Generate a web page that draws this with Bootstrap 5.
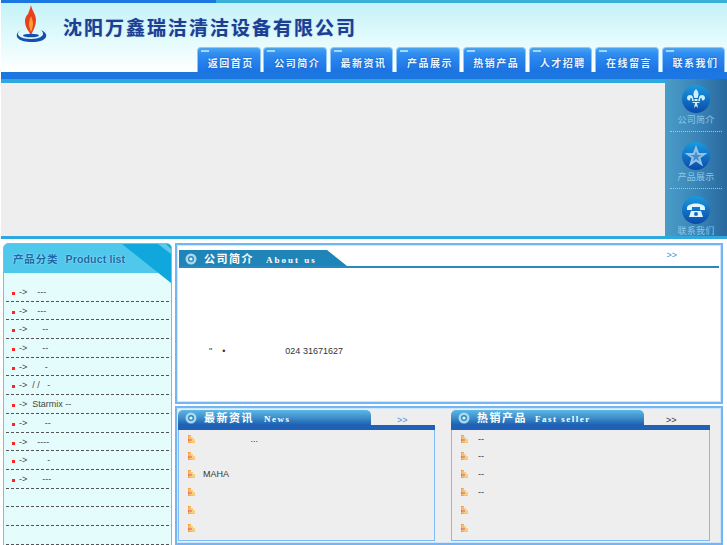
<!DOCTYPE html>
<html lang="zh-CN">
<head>
    <meta charset="UTF-8">
    <meta name="viewport" content="width=device-width, initial-scale=1.0">
    <title>沈阳万鑫瑞洁清洁设备有限公司</title>
    <link href="https://cdn.jsdelivr.net/npm/bootstrap@5.3.0/dist/css/bootstrap.min.css" rel="stylesheet">
    <style>
        html, body { height: 545px; overflow: hidden; }
        body { background: #fff; font-family: "Liberation Sans", "Noto Sans CJK SC", sans-serif; font-size: 9px; color: #333; line-height: 1; }
        .page-top { height: 3px; margin-left: 1px; background: linear-gradient(90deg, #1a78e0 0 215px, #38b0d8 215px); }
        .page-head { height: 69px; margin-left: 1px; background: linear-gradient(180deg, #c4f2f8 0%, #e4fbfc 55%, #fff 100%); }
        .logo-box { width: 62px; padding: 2px 0 0 14px; }
        .co-name { font-family: "Noto Sans CJK SC", sans-serif; font-weight: 700; font-size: 19px; letter-spacing: 2px; color: #1c3f94; padding-top: 12px; line-height: 24px; text-shadow: 0 0 1px #7f9fd0; white-space: nowrap; }
        .tab-row { position: absolute; top: 47px; left: 197px; gap: 2.9px; }
        .tab-item { position: relative; width: 63.5px; height: 25px; padding: 9px 0 0 4px; text-align: center; font-family: "Noto Sans CJK SC", sans-serif; font-weight: 700; font-size: 10px; letter-spacing: 1.5px; line-height: 12px; color: #e8f6ff; text-shadow: 0 0 2px #0d4fa8; background: linear-gradient(180deg, #4aa4f0 0%, #2f8cf0 25%, #1b72e4 100%); border: 1px solid #8fc8f6; border-bottom: 0; border-radius: 4px 4px 0 0; }
        .tab-item::before { content: ""; position: absolute; left: 3px; top: 2px; width: 8px; height: 2px; background: #a6d6fa; }
        .head-band { height: 11px; margin-left: 1px; background: #1c78e0; border-bottom: 4px solid #2fa8e0; }
        .hero-area { height: 156px; margin-left: 1px; background: #eeeeee; border-bottom: 3px solid #2fa8e0; }
        .side-links { position: relative; width: 62px; height: 157px; margin: -4px 0 0 auto; background: linear-gradient(90deg, #4a9cc8 0%, #3a86b8 50%, #2a689e 100%); }
        .side-item { text-align: center; color: #8cc8e8; font-size: 9px; letter-spacing: .3px; font-family: "Noto Sans CJK SC", sans-serif; border-bottom: 1px dotted #9fc8dc; margin: 0 5px; }
        .side-item:nth-child(1) { height: 53px; padding-top: 6px; }
        .side-item:nth-child(2) { height: 57px; padding-top: 10px; }
        .side-item:nth-child(3) { height: 47px; padding-top: 7px; border-bottom: 0; }
        .side-item svg { display: block; margin: 0 auto 2px; }
        .page-body { gap: 3px; padding: 4px 4px 0 3px; }
        .left-col { position: relative; width: 169px; height: 310px; flex: none; background: #e4fcfc; border: 1px solid #8ab4e4; border-top-left-radius: 5px; border-top-right-radius: 5px; overflow: hidden; }
        .left-head { height: 29px; background: #4fc8ec; padding: 8px 0 0 9px; font-weight: 700; font-size: 10.500px; letter-spacing: .85px; line-height: 14px; color: #1a6aa8; text-shadow: 0 0 2px #b8ecfa; }
        .list-en { letter-spacing: .17px; margin-left: 4px; }
        .left-corner { position: absolute; right: 0; top: 0; }
        .left-list { padding: 10px 2px 0 2px; }
        .left-list li { height: 18.7px; border-bottom: 1px dashed #555; padding-top: 4px; white-space: pre; line-height: 10px; color: #444; }
        .red-dot { display: inline-block; width: 3px; height: 3px; background: #f22; margin: 0 4px 0 6px; vertical-align: 0; }
        .right-col { flex: 1; min-width: 0; }
        .about-box { height: 161px; border: 2px solid #74b6f4; box-shadow: inset 0 0 0 1px #cfe6fc; padding: 5px 2px 0 2px; margin-bottom: 2px; }
        .about-head { border-bottom: 2px solid #2a88c0; height: 18px; }
        .about-tab { position: relative; width: 168px; height: 16px; background: #1f85b8; clip-path: polygon(0 0, 148px 0, 100% 100%, 0 100%); padding: 1px 0 0 6px; color: #fff; font-family: "Noto Sans CJK SC", sans-serif; font-weight: 700; font-size: 11px; letter-spacing: 1.5px; line-height: 14px; }
        .en-title { font-family: "Liberation Serif", serif; font-size: 9px; letter-spacing: 1.5px; margin-left: 10px; }
        .about-tab .en-title { letter-spacing: 2px; margin-left: 12px; }
        .more-link { color: #3f8fe6; font-size: 9px; padding-top: 1px; }
        .about-head .more-link { margin: 0 42px 0 auto; }
        .news-tab-row .more-link { margin-left: 26px; padding-top: 6px; }
        .news-card + .news-card .more-link { margin-left: 22px; color: #333; }
        .about-text { padding: 79px 0 0 30px; white-space: pre; height: 100px; }
        .about-text span { margin-left: 60px; }
        .news-box { height: 139px; border: 2px solid #74b6f4; box-shadow: inset 0 0 0 1px #cfe6fc; background: #eeeeee; padding: 2px 1px 0 1px; gap: 16px; }
        .news-card { width: 257px; flex: none; }
        .news-card + .news-card { width: 259px; }
        .news-tab-row { height: 15px; }
        .news-tab { width: 193px; height: 15px; background: linear-gradient(180deg, #5cb8e4 0%, #3f90cc 50%, #1e60b2 100%); border-radius: 5px 5px 0 0; padding: 1px 0 0 7px; color: #fff; font-family: "Noto Sans CJK SC", sans-serif; font-weight: 700; font-size: 11px; letter-spacing: 1.5px; line-height: 13px; }
        .news-bar { height: 5px; background: #2060b8; }
        .news-list { height: 111px; border: 1px solid #82bcf8; border-top: 0; padding: 0.5px 0 0 9px; }
        .news-list li { height: 17.9px; white-space: pre; line-height: 10px; padding-top: 3px; }
        .dot-icon { display: inline-block; width: 7px; height: 8px; margin-right: 8px; vertical-align: -1px; }
        .news-card + .news-card .dot-icon { margin-right: 10px; }
        .ring-icon { vertical-align: -2px; margin-right: 7px; }
        .news-card + .news-card .en-title { margin-left: 8px; }
    </style>
</head>
<body>

    <svg width="0" height="0" class="position-absolute">
        <symbol id="dots" viewBox="0 0 7 8">
            <rect x="0" y="0" width="3" height="8" fill="#f59a23"/>
            <rect x="3" y="2" width="2" height="6" fill="#f7b733"/>
            <rect x="5" y="4" width="2" height="4" fill="#f9c95a"/>
            <rect x="0" y="4" width="4" height="2" fill="#ea4a1f"/>
            <path d="M0 2h7M0 4h7M0 6h7M2 0v8M4 0v8" stroke="#eee" stroke-width=".5"/>
        </symbol>
        <symbol id="ring" viewBox="0 0 12 12">
            <circle cx="6" cy="6" r="5.500" fill="#a8d8ee"/>
            <circle cx="6" cy="6" r="3" fill="#2a88c0"/>
            <circle cx="6" cy="6" r="1.600" fill="#e8f6fc"/>
        </symbol>
        <linearGradient id="orb" x1="0" y1="0" x2="0" y2="1">
            <stop offset="0" stop-color="#1a9ae0"/>
            <stop offset="1" stop-color="#0a4aa8"/>
        </linearGradient>
    </svg>

    <div class="page-top"></div>
    <header class="page-head d-flex">
        <div class="logo-box">
            <svg width="32" height="38" viewBox="0 0 32 38">
                <path d="M16 0c1 6 5 9 5 15 0 5-2 9-5 15-3-5-6-8-6-14 0-3 1-5 3-7 1-3 2-5 3-9z" fill="#e8401c"/>
                <path d="M16 11c1 3 2 5 2 8 0 3-1 5-2 8-1-3-2-5-2-8 0-3 1-5 2-8z" fill="#f9a03a"/>
                <path d="M8 24c-5 2-7 5-6 8 2 4 9 5 15 5 7 0 13-2 14-5 1-3-1-5-5-7 2 2 3 4 1 6-2 2-6 3-11 3-6 0-10-1-12-3-2-2-1-5 4-7z" fill="#1450b0"/>
                <ellipse cx="16" cy="30.500" rx="8" ry="1.800" fill="#1450b0"/>
            </svg>
        </div>
        <div class="co-name">沈阳万鑫瑞洁清洁设备有限公司</div>
        <nav class="tab-row d-flex">
            <div class="tab-item">返回首页</div>
            <div class="tab-item">公司简介</div>
            <div class="tab-item">最新资讯</div>
            <div class="tab-item">产品展示</div>
            <div class="tab-item">热销产品</div>
            <div class="tab-item">人才招聘</div>
            <div class="tab-item">在线留言</div>
            <div class="tab-item">联系我们</div>
        </nav>
    </header>
    <div class="head-band"></div>

    <section class="hero-area d-flex">
        <div class="side-links">
            <div class="side-item">
                <svg width="28" height="28" viewBox="0 0 28 28">
                    <circle cx="14" cy="14" r="14" fill="url(#orb)"/>
                    <path d="M14 4c3 3 3 6 1.500 9h-3C11 10 11 7 14 4zM12.500 14h3v2h-3zM11 13c0-4-6-4-6 0 0 2 2 3 3.500 2-1-1-.5-2 .5-2 1 0 1 2 1 3h2zM17 13c0-4 6-4 6 0 0 2-2 3-3.500 2 1-1 .5-2-.5-2-1 0-1 2-1 3h-2zM10 17h8l-1 1h-2l1 5-2-2-2 2 1-5h-2z" fill="#cfeefc"/>
                </svg>
                公司简介
            </div>
            <div class="side-item">
                <svg width="28" height="28" viewBox="0 0 28 28">
                    <circle cx="14" cy="14" r="14" fill="url(#orb)"/>
                    <path d="M14 3l3 8h8.500l-7 5 2.500 8.500L14 19.500 7 24.500 9.500 16l-7-5H11z" fill="#8fc4e8"/>
                    <path d="M14 9l1.500 4h4l-3.500 2.500 1.500 4L14 17l-3.500 2.500 1.500-4L8.500 13h4z" fill="#4a8cc8"/>
                </svg>
                产品展示
            </div>
            <div class="side-item">
                <svg width="28" height="28" viewBox="0 0 28 28">
                    <circle cx="14" cy="14" r="14" fill="url(#orb)"/>
                    <path d="M5 12c0-6 18-6 18 0v2h-5v-3h-8v3H5z" fill="#e0f4fc"/>
                    <path d="M9 15h10l2 6H7z" fill="#e0f4fc"/>
                    <circle cx="14" cy="18" r="2" fill="#1a6ac0"/>
                </svg>
                联系我们
            </div>
        </div>
    </section>

    <main class="page-body d-flex">
        <aside class="left-col">
            <div class="left-head">产品分类<span class="list-en"> Product list</span></div>
            <svg class="left-corner" width="49" height="39" viewBox="0 0 49 39">
                <path d="M0 0h49v39z" fill="#10a8dc"/>
                <path d="M36 0h8l5 5v5z" fill="#5cc8ec"/>
            </svg>
            <ul class="left-list list-unstyled mb-0">
                <li><i class="red-dot"></i>->    ---</li>
                <li><i class="red-dot"></i>->    ---</li>
                <li><i class="red-dot"></i>->      --</li>
                <li><i class="red-dot"></i>->      --</li>
                <li><i class="red-dot"></i>->       -</li>
                <li><i class="red-dot"></i>->  / /   -</li>
                <li><i class="red-dot"></i>->  Starmix --</li>
                <li><i class="red-dot"></i>->       --</li>
                <li><i class="red-dot"></i>->    ----</li>
                <li><i class="red-dot"></i>->        -</li>
                <li><i class="red-dot"></i>->      ---</li>
                <li></li>
                <li></li>
                <li></li>
            </ul>
        </aside>

        <div class="right-col">
            <section class="about-box">
                <div class="about-head d-flex">
                    <div class="about-tab"><svg class="ring-icon" width="12" height="12"><use href="#ring"/></svg>公司简介<span class="en-title">About us</span></div>
                    <a class="more-link text-decoration-none">&gt;&gt;</a>
                </div>
                <div class="about-text">"    •<span>024 31671627</span></div>
            </section>

            <section class="news-box d-flex">
                <div class="news-card">
                    <div class="news-tab-row d-flex">
                        <div class="news-tab"><svg class="ring-icon" width="12" height="12"><use href="#ring"/></svg>最新资讯<span class="en-title">News</span></div>
                        <a class="more-link text-decoration-none">&gt;&gt;</a>
                    </div>
                    <div class="news-bar"></div>
                    <ul class="news-list list-unstyled mb-0">
                        <li><svg class="dot-icon"><use href="#dots"/></svg>                   ...</li>
                        <li><svg class="dot-icon"><use href="#dots"/></svg></li>
                        <li><svg class="dot-icon"><use href="#dots"/></svg>MAHA</li>
                        <li><svg class="dot-icon"><use href="#dots"/></svg></li>
                        <li><svg class="dot-icon"><use href="#dots"/></svg></li>
                        <li><svg class="dot-icon"><use href="#dots"/></svg></li>
                    </ul>
                </div>
                <div class="news-card">
                    <div class="news-tab-row d-flex">
                        <div class="news-tab"><svg class="ring-icon" width="12" height="12"><use href="#ring"/></svg>热销产品<span class="en-title">Fast seller</span></div>
                        <a class="more-link text-decoration-none">&gt;&gt;</a>
                    </div>
                    <div class="news-bar"></div>
                    <ul class="news-list list-unstyled mb-0">
                        <li><svg class="dot-icon"><use href="#dots"/></svg>--</li>
                        <li><svg class="dot-icon"><use href="#dots"/></svg>--</li>
                        <li><svg class="dot-icon"><use href="#dots"/></svg>--</li>
                        <li><svg class="dot-icon"><use href="#dots"/></svg>--</li>
                        <li><svg class="dot-icon"><use href="#dots"/></svg></li>
                        <li><svg class="dot-icon"><use href="#dots"/></svg></li>
                    </ul>
                </div>
            </section>
        </div>
    </main>

    <script src="https://cdn.jsdelivr.net/npm/bootstrap@5.3.0/dist/js/bootstrap.bundle.min.js"></script>
</body>
</html>
